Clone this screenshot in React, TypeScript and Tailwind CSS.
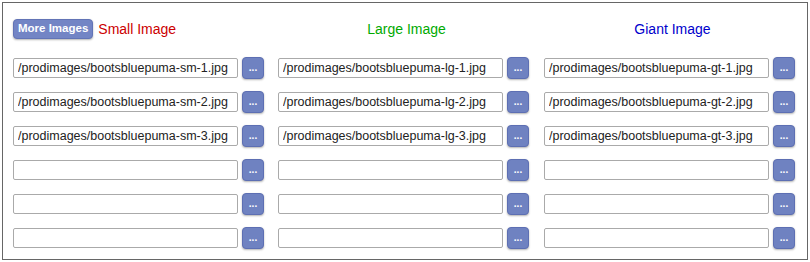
const rows = [
  ["/prodimages/bootsbluepuma-sm-1.jpg", "/prodimages/bootsbluepuma-lg-1.jpg", "/prodimages/bootsbluepuma-gt-1.jpg"],
  ["/prodimages/bootsbluepuma-sm-2.jpg", "/prodimages/bootsbluepuma-lg-2.jpg", "/prodimages/bootsbluepuma-gt-2.jpg"],
  ["/prodimages/bootsbluepuma-sm-3.jpg", "/prodimages/bootsbluepuma-lg-3.jpg", "/prodimages/bootsbluepuma-gt-3.jpg"],
  ["", "", ""],
  ["", "", ""],
  ["", "", ""],
];

function BrowseButton() {
  return (
    <button
      type="button"
      className="flex h-[22px] w-[22px] shrink-0 items-end justify-center rounded-[4px] border border-[#5d6fb3] bg-[#6f82c1] pb-[5px] text-[10px] font-bold leading-none text-white shadow-[0_1px_2px_rgba(0,0,0,0.3)]"
    >
      ...
    </button>
  );
}

function ImageField({ value }: { value: string }) {
  return (
    <div className="flex items-center gap-[4px]">
      <input
        readOnly
        value={value}
        className="h-[20px] w-[225px] rounded-[2px] border border-[#aaaaaa] bg-white px-[4px] text-[12.5px] text-[#222] outline-none"
      />
      <BrowseButton />
    </div>
  );
}

export default function App() {
  return (
    <div className="ml-[2px] mt-[2px] h-[258px] w-[806px] border border-[#666] bg-white font-['Liberation_Sans',Arial,sans-serif]">
      <div className="grid grid-cols-[265px_266px_251px] pl-[10px] pt-[15px]">
        <div className="flex h-[22px] items-center">
          <button
            type="button"
            className="h-[20px] rounded-[4px] border border-[#6274b6] bg-[#7385c5] px-[4px] text-[11.5px] font-bold leading-none text-white shadow-[0_1px_2px_rgba(0,0,0,0.3)]"
          >
            More Images
          </button>
          <span className="ml-[5px] text-[14px] text-[#cc0000]">Small Image</span>
        </div>
        <div className="flex h-[22px] w-[251px] items-center justify-center pl-[6px] text-[14px] text-[#00aa00]">
          Large Image
        </div>
        <div className="flex h-[22px] items-center justify-center pl-[6px] text-[14px] text-[#0000cc]">
          Giant Image
        </div>
      </div>
      <div className="mt-[17px] flex flex-col gap-[12px] pl-[10px]">
        {rows.map((r, i) => (
          <div key={i} className="grid grid-cols-[265px_266px_251px]">
            {r.map((v, j) => (
              <ImageField key={j} value={v} />
            ))}
          </div>
        ))}
      </div>
    </div>
  );
}
